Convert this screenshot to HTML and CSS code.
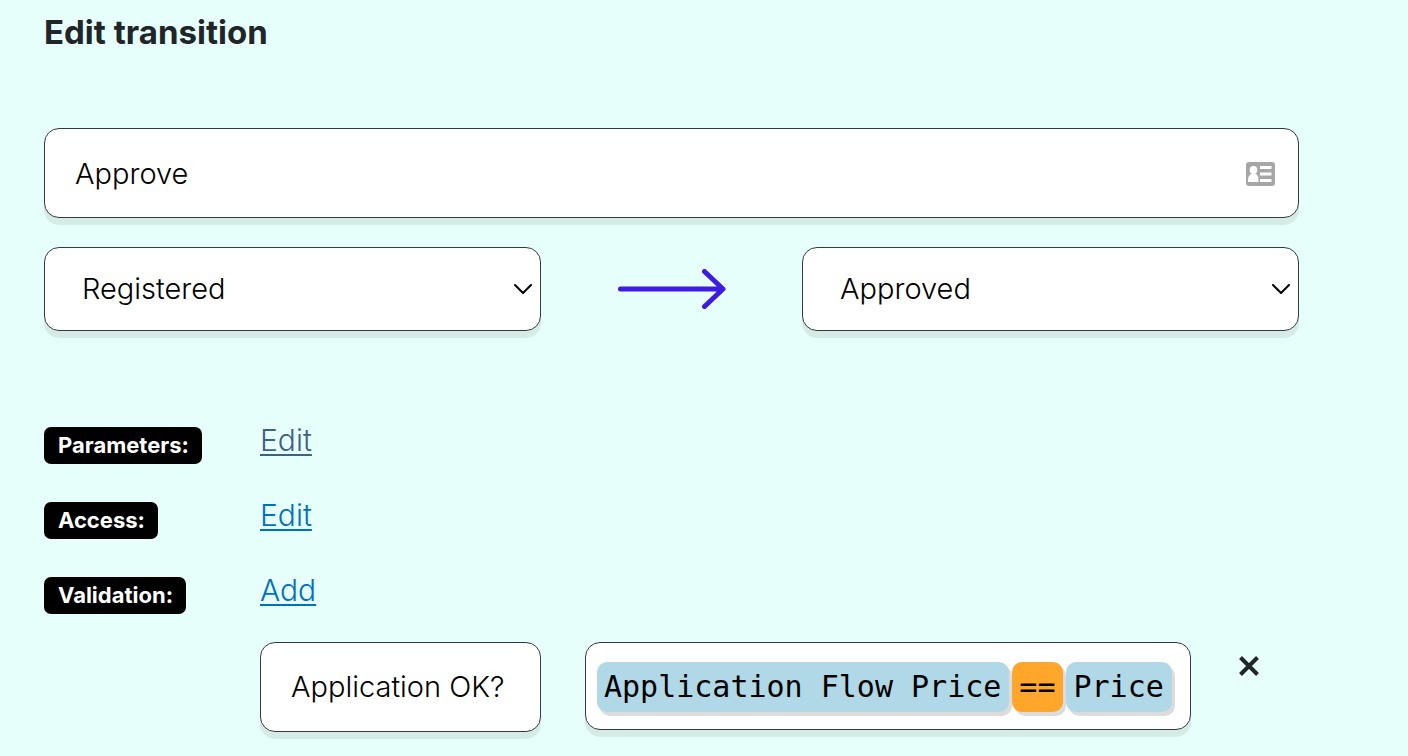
FILE: index.html
```html
<!DOCTYPE html>
<html lang="en">
<head>
<meta charset="utf-8">
<meta name="viewport" content="width=device-width, initial-scale=1">
<title>Edit transition</title>
<link rel="stylesheet" href="styles.css">
</head>
<body>
<main class="editor">
  <h1 class="title">Edit transition</h1>
  <form class="form">
    <div class="name-field field">
      <input class="name-input" type="text" value="Approve" aria-label="Transition name">
      <svg class="contact-icon" viewBox="0 0 29 24" aria-hidden="true">
        <rect width="29" height="24" rx="3" fill="#a6a6a6"/>
        <g fill="#fff">
          <ellipse cx="7.500" cy="8" rx="3.800" ry="4"/>
          <path d="M2 20v-1.500c0-3.500 1-5 3-6.500h5c2 1.500 2.500 3 2.500 6.500V20z"/>
          <path d="M14 4h11.500v3H14zM14 10.500h11.500v3H14zM14 17h11.500v3H14z"/>
        </g>
      </svg>
    </div>
    <div class="states">
      <div class="select-wrap">
        <select class="state-select field" aria-label="From state"><option>Registered</option></select>
        <svg class="chevron" viewBox="0 0 18 10" aria-hidden="true"><path d="M1 1l8 8 8-8"/></svg>
      </div>
      <svg class="arrow" viewBox="0 0 108 40" aria-hidden="true"><path d="M2.500 20H104M86.500 2.500L105 20L86.500 37.500"/></svg>
      <div class="select-wrap">
        <select class="state-select field" aria-label="To state"><option>Approved</option></select>
        <svg class="chevron" viewBox="0 0 18 10" aria-hidden="true"><path d="M1 1l8 8 8-8"/></svg>
      </div>
    </div>
    <div class="settings">
      <div class="setting"><span class="badge">Parameters:</span><a class="link link-active" href="#parameters">Edit</a></div>
      <div class="setting"><span class="badge">Access:</span><a class="link" href="#access">Edit</a></div>
      <div class="setting"><span class="badge">Validation:</span><a class="link" href="#validation">Add</a></div>
    </div>
    <div class="rule">
      <input class="rule-name field" type="text" value="Application OK?" aria-label="Validation message">
      <div class="expression field">
        <span class="token">Application Flow Price</span>
        <span class="token operator">==</span>
        <span class="token">Price</span>
      </div>
      <button class="remove" type="button" aria-label="Remove validation">
        <svg class="remove-icon" viewBox="0 0 20 20" aria-hidden="true"><path d="M1.500 1.500l17 17M18.500 1.500l-17 17"/></svg>
      </button>
    </div>
  </form>
</main>
</body>
</html>
```
FILE: styles.css
```css
* { box-sizing: border-box; }

body {
  margin: 0;
  background: #e7fffa;
  color: #212529;
  font-family: Inter, "Liberation Sans", sans-serif;
  font-size: 29px;
  font-weight: 300;
}

.editor { padding: 11px 109px 16px 44px; }

.title {
  margin: 0 0 75px;
  font-size: 33px;
  line-height: 42px;
  font-weight: 700;
}

.field {
  border: 1px solid #343a40;
  border-radius: 15px;
  background: #fff;
  box-shadow: 0 7px 0 rgba(0, 0, 0, 0.08);
  color: #000;
  font: inherit;
}

.name-field {
  display: flex;
  align-items: center;
  height: 90px;
  padding: 2px 23px 0 30px;
}

.name-input {
  flex: 1;
  min-width: 0;
  padding: 0 0 2px;
  border: 0;
  outline: 0;
  background: transparent;
  color: #000;
  font: inherit;
}

.contact-icon { width: 29px; height: 24px; }

.states {
  display: grid;
  grid-template-columns: 497fr 261fr 497fr;
  align-items: center;
  margin-top: 29px;
}

.select-wrap { display: grid; align-items: center; }
.select-wrap > * { grid-area: 1 / 1; }

.state-select {
  appearance: none;
  width: 100%;
  height: 84px;
  padding: 0 37px 2px;
}

.chevron {
  justify-self: end;
  width: 18px;
  height: 10px;
  margin-right: 9px;
  fill: none;
  stroke: #000;
  stroke-width: 2;
  stroke-linecap: round;
  stroke-linejoin: round;
  pointer-events: none;
}

.arrow {
  justify-self: center;
  width: 108px;
  height: 40px;
  fill: none;
  stroke: #3d1be0;
  stroke-width: 5;
  stroke-linecap: round;
  stroke-linejoin: round;
}

.settings { margin-top: 90px; }

.setting {
  display: grid;
  grid-template-columns: 216fr 1039fr;
  align-items: start;
  height: 75px;
}

.badge {
  justify-self: start;
  margin-top: 6px;
  padding: 0 13px 0 14px;
  border-radius: 7px;
  background: #000;
  color: #fff;
  font-size: 22px;
  line-height: 37px;
  font-weight: 700;
}

.link {
  justify-self: start;
  color: #0070c0;
  font-size: 30px;
  line-height: 38px;
  text-underline-offset: 3px;
  text-decoration-thickness: 2px;
}

.link-active { color: #3f5f86; }

.rule {
  display: grid;
  grid-template-columns: 216fr 281fr 44fr 606fr 108fr;
  align-items: start;
  margin-top: -4px;
}

.rule-name {
  grid-column: 2;
  width: 100%;
  height: 90px;
  padding: 0 30px 2px;
}

.expression {
  grid-column: 4;
  display: flex;
  align-items: center;
  gap: 3px;
  height: 88px;
  padding: 2px 11px 0;
}

.token {
  padding: 0 8px 0 7px;
  border-radius: 10px;
  background: #b0d8e6;
  box-shadow: 3px 4px 0 #dcdcdc;
  font-family: "DejaVu Sans Mono", monospace;
  font-size: 30px;
  font-weight: 400;
  line-height: 50px;
  white-space: nowrap;
}

.operator { background: #ffa62b; }

.remove {
  grid-column: 5;
  justify-self: center;
  display: flex;
  margin: 14px 0 0 8px;
  padding: 0;
  border: 0;
  background: none;
}

.remove-icon {
  width: 20px;
  height: 20px;
  fill: none;
  stroke: #212529;
  stroke-width: 4;
  stroke-linecap: butt;
}
```
